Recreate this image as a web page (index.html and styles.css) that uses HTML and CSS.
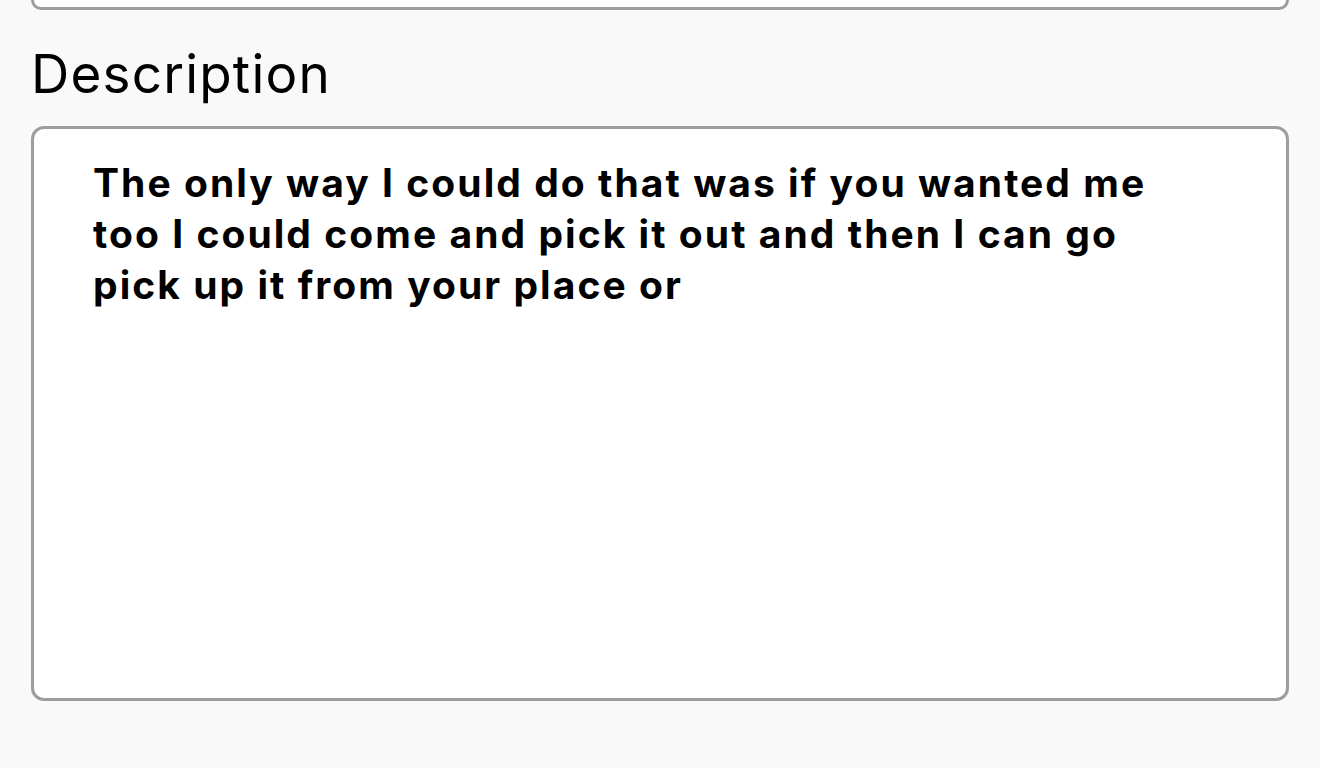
FILE: index.html
```html
<!DOCTYPE html>
<html>
<head>
<meta charset="utf-8">
<link rel="stylesheet" href="styles.css">
</head>
<body>
<div class="form">
  <div class="prev-field"></div>
  <label class="label">Description</label>
  <div class="textarea">The only way I could do that was if you wanted me too I could come and pick it out and then I can go pick up it from your place or</div>
</div>
</body>
</html>
```
FILE: styles.css
```css
html, body {
  margin: 0;
  padding: 0;
  background: #f9f9f9;
  font-family: Inter, "Noto Sans", sans-serif;
  color: #000;
}
.form {
  padding: 0 31px;
  display: flex;
  flex-direction: column;
}
.prev-field {
  height: 7px;
  border: 3px solid #9d9d9d;
  border-top: none;
  border-radius: 0 0 13px 13px;
  background: #fff;
}
.label {
  font-size: 53px;
  line-height: 60px;
  margin-top: 34px;
  margin-left: 0;
  font-weight: 400;
  letter-spacing: 1.2px;
}
.textarea {
  margin-top: 22px;
  height: 575px;
  box-sizing: border-box;
  border: 3px solid #9d9d9d;
  border-radius: 13px;
  background: #fff;
  padding: 28px 116px 0 59px;
  font-size: 39px;
  line-height: 51px;
  font-weight: 700;
  letter-spacing: 2.05px;
}
```
